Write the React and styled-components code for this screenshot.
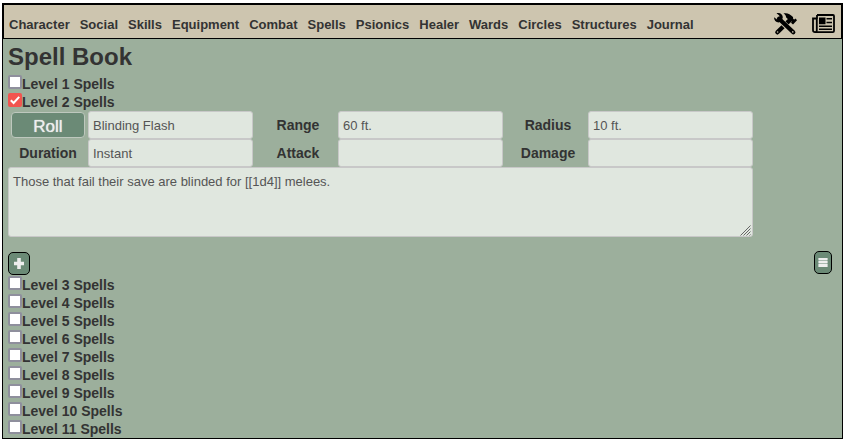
import React from "react";
import styled, { createGlobalStyle } from "styled-components";

const GlobalStyle = createGlobalStyle`
  *, *::before, *::after { box-sizing: border-box; }
  body {
    margin: 0;
    background: #fff;
    color: #333;
    font-family: "Liberation Sans", Arial, sans-serif;
    overflow: hidden;
  }
`;

const Sheet = styled.main`
  width: 841px;
  height: 436px;
  margin: 3px 0 0 2px;
  border: 1px solid #000;
  background: #9caf9c;
  overflow: hidden;
`;

const Header = styled.header`
  height: 35px;
  display: flex;
  align-items: center;
  justify-content: space-between;
  padding: 0 6px 0 5px;
  border: 1px solid #000;
  background: #cdc5af;
`;

const Nav = styled.nav`
  display: flex;
  gap: 10px;
  padding-top: 6px;
`;

const NavItem = styled.a`
  font-size: 13px;
  font-weight: 700;
  line-height: 18px;
`;

const Tools = styled.div`
  display: flex;
  align-items: center;
  gap: 15px;
  padding-top: 4px;
  color: #000;

  svg { display: block; }
`;

const Body = styled.section`
  padding: 0 5px;
`;

const Title = styled.h1`
  margin: 0;
  height: 36px;
  font-size: 24px;
  line-height: 35px;
`;

const Level = styled.label`
  display: flex;
  height: 18px;
  font-size: 14px;
  font-weight: 700;
  line-height: 18px;
`;

const Check = styled.input`
  appearance: none;
  flex: none;
  width: 14px;
  height: 14px;
  margin: 0;
  border: 2px solid ${(p) => (p.defaultChecked ? "#f2544f" : "#8f8f9d")};
  border-radius: 2px;
  background: ${(p) => (p.defaultChecked ? "#f2544f" : "#fff")};
`;

const CheckCell = styled.span`
  position: relative;
  display: flex;
  width: 14px;

  svg {
    position: absolute;
    top: 0;
    left: 0;
  }
`;

const Fields = styled.div`
  display: grid;
  grid-template-columns: 80px 165px 85px 165px 85px 165px;
  grid-auto-rows: 28px;
`;

const FieldLabel = styled.span`
  padding-left: ${(p) => p.$shift || 0}px;
  font-size: 14px;
  font-weight: 700;
  line-height: 28px;
  text-align: center;
`;

const Field = styled.input`
  width: 100%;
  height: 28px;
  margin: 0;
  padding: 1px 4px 0;
  border: 1px solid #c8c8c8;
  border-radius: 3px;
  background: #e0e7df;
  color: #555;
  font: 13px "Liberation Sans", Arial, sans-serif;
`;

const RollButton = styled.button`
  width: 74px;
  height: 26px;
  margin: 1px 0 0 3px;
  padding: 4px 0 0;
  border: 1px solid #bec8be;
  border-radius: 4px;
  background: #6b8a76;
  color: #eee;
  font: 17px/20px "Liberation Sans", Arial, sans-serif;
  text-shadow: 0 0 1px #eee;
`;

const DescriptionBox = styled.div`
  position: relative;
  width: 745px;
  height: 70px;
`;

const Description = styled.textarea`
  display: block;
  width: 100%;
  height: 100%;
  margin: 0;
  padding: 5px 4px;
  border: 1px solid #c8c8c8;
  border-radius: 3px;
  background: #e0e7df;
  color: #555;
  font: 13px/18px "Liberation Sans", Arial, sans-serif;
  resize: none;
`;

const Grip = styled.svg`
  position: absolute;
  right: 2px;
  bottom: 1px;
  pointer-events: none;
`;

const Actions = styled.div`
  display: flex;
  justify-content: space-between;
  align-items: flex-start;
  height: 39px;
  padding: 14px 5px 0 0;
`;

const IconButton = styled.button`
  display: flex;
  align-items: center;
  justify-content: center;
  width: ${(p) => p.$width}px;
  height: 23px;
  margin-top: ${(p) => p.$drop || 0}px;
  padding: 0;
  border: 1px solid #000;
  border-radius: 5px;
  background: #6b8a76;
  color: #eee;
`;

const tabs = ["Character", "Social", "Skills", "Equipment", "Combat", "Spells",
  "Psionics", "Healer", "Wards", "Circles", "Structures", "Journal"];

function SpellLevel({ level, checked }) {
  return (
    <Level>
      <CheckCell>
        <Check type="checkbox" defaultChecked={checked} />
        {checked && (
          <svg width="14" height="14" viewBox="0 0 14 14" fill="none">
            <path d="M2.8 7.2 5.6 10 11.2 3.8" stroke="#fff" strokeWidth="2" />
          </svg>
        )}
      </CheckCell>
      Level {level} Spells
    </Level>
  );
}

function ToolsIcon() {
  return (
    <svg width="24" height="24" viewBox="0 0 24 24">
      <path d="M4.4 20.3 17.5 7.5" stroke="#000" strokeWidth="4.4" strokeLinecap="round" />
      <path d="M9 10 18.5 19" stroke="#cdc5af" strokeWidth="5.6" />
      <path d="M6 6.8 20.3 20.3" stroke="#000" strokeWidth="4.2" strokeLinecap="round" />
      <path d="M1 5.2 4.1 7.5 6.5 6.2 6.3 3.5 3.5 1.3C6.8.3 9.6 2 9.8 5.2L8.7 9 5.7 10.5C2.8 10.1 1 8.3 1 5.2Z" />
      <path d="M10.5 1.5C14 .6 17 1.8 20 5l.2 2.1 1.2.3 1.1-.8 1.5 1.6-4 4.3-2-1.8.8-1.2-.5-1.3-2 .3-3.3-3.2C13.2 3.7 12.2 2.4 10.5 1.5Z" />
      <circle cx="4.6" cy="20" r=".8" fill="#cdc5af" />
      <circle cx="19.8" cy="19.9" r=".8" fill="#cdc5af" />
    </svg>
  );
}

function NewsIcon() {
  return (
    <svg width="23" height="20" viewBox="0 0 23 20">
      <path d="M5 1H21q1 0 1 1v15q0 1.2-1.2 1.2H3q-2 0-2-2V4.5h3.8v12q0 1.5-1.5 1.7M5 1v4" fill="none" stroke="#000" strokeWidth="1.8" />
      <path d="M7 3.5h6.5v6.8H7ZM14.5 4H20v1.6h-5.5ZM14.5 7.7H20v1.6h-5.5ZM7 11.5h13v1.5H7ZM7 14.5h13V16H7Z" />
    </svg>
  );
}

export default function App() {
  return (
    <>
      <GlobalStyle />
      <Sheet>
        <Header>
          <Nav>{tabs.map((tab) => <NavItem key={tab}>{tab}</NavItem>)}</Nav>
          <Tools><ToolsIcon /><NewsIcon /></Tools>
        </Header>
        <Body>
          <Title>Spell Book</Title>
          <SpellLevel level={1} />
          <SpellLevel level={2} checked />
          <Fields>
            <RollButton>Roll</RollButton>
            <Field defaultValue="Blinding Flash" />
            <FieldLabel $shift={5}>Range</FieldLabel>
            <Field defaultValue="60 ft." />
            <FieldLabel $shift={5}>Radius</FieldLabel>
            <Field defaultValue="10 ft." />
            <FieldLabel>Duration</FieldLabel>
            <Field defaultValue="Instant" />
            <FieldLabel $shift={5}>Attack</FieldLabel>
            <Field />
            <FieldLabel $shift={5}>Damage</FieldLabel>
            <Field />
          </Fields>
          <DescriptionBox>
            <Description spellCheck={false} defaultValue="Those that fail their save are blinded for [[1d4]] melees." />
            <Grip width="11" height="11" viewBox="0 0 11 11">
              <path d="M.5 10.5 10.5.5M3.5 10.5l7-7M6.5 10.5l4-4M9.5 10.5l1-1" stroke="#666" strokeWidth="1" />
            </Grip>
          </DescriptionBox>
          <Actions>
            <IconButton $width={22} $drop={1} aria-label="Add spell">
              <svg width="10" height="11" viewBox="0 0 10 11" fill="#eee">
                <path d="M3.2 0h3.6v3.7H10v3.6H6.8V11H3.2V7.3H0V3.7h3.2Z" />
              </svg>
            </IconButton>
            <IconButton $width={18} aria-label="Reorder spells">
              <svg width="10" height="11" viewBox="0 0 10 11">
                <path d="M.5 1h9v9h-9Z" fill="#a9bab0" />
                <path d="M.5 1h9v2h-9ZM.5 4h9v2h-9ZM.5 7h9v3h-9Z" fill="#eee" />
              </svg>
            </IconButton>
          </Actions>
          {[3, 4, 5, 6, 7, 8, 9, 10, 11].map((n) => <SpellLevel key={n} level={n} />)}
        </Body>
      </Sheet>
    </>
  );
}
